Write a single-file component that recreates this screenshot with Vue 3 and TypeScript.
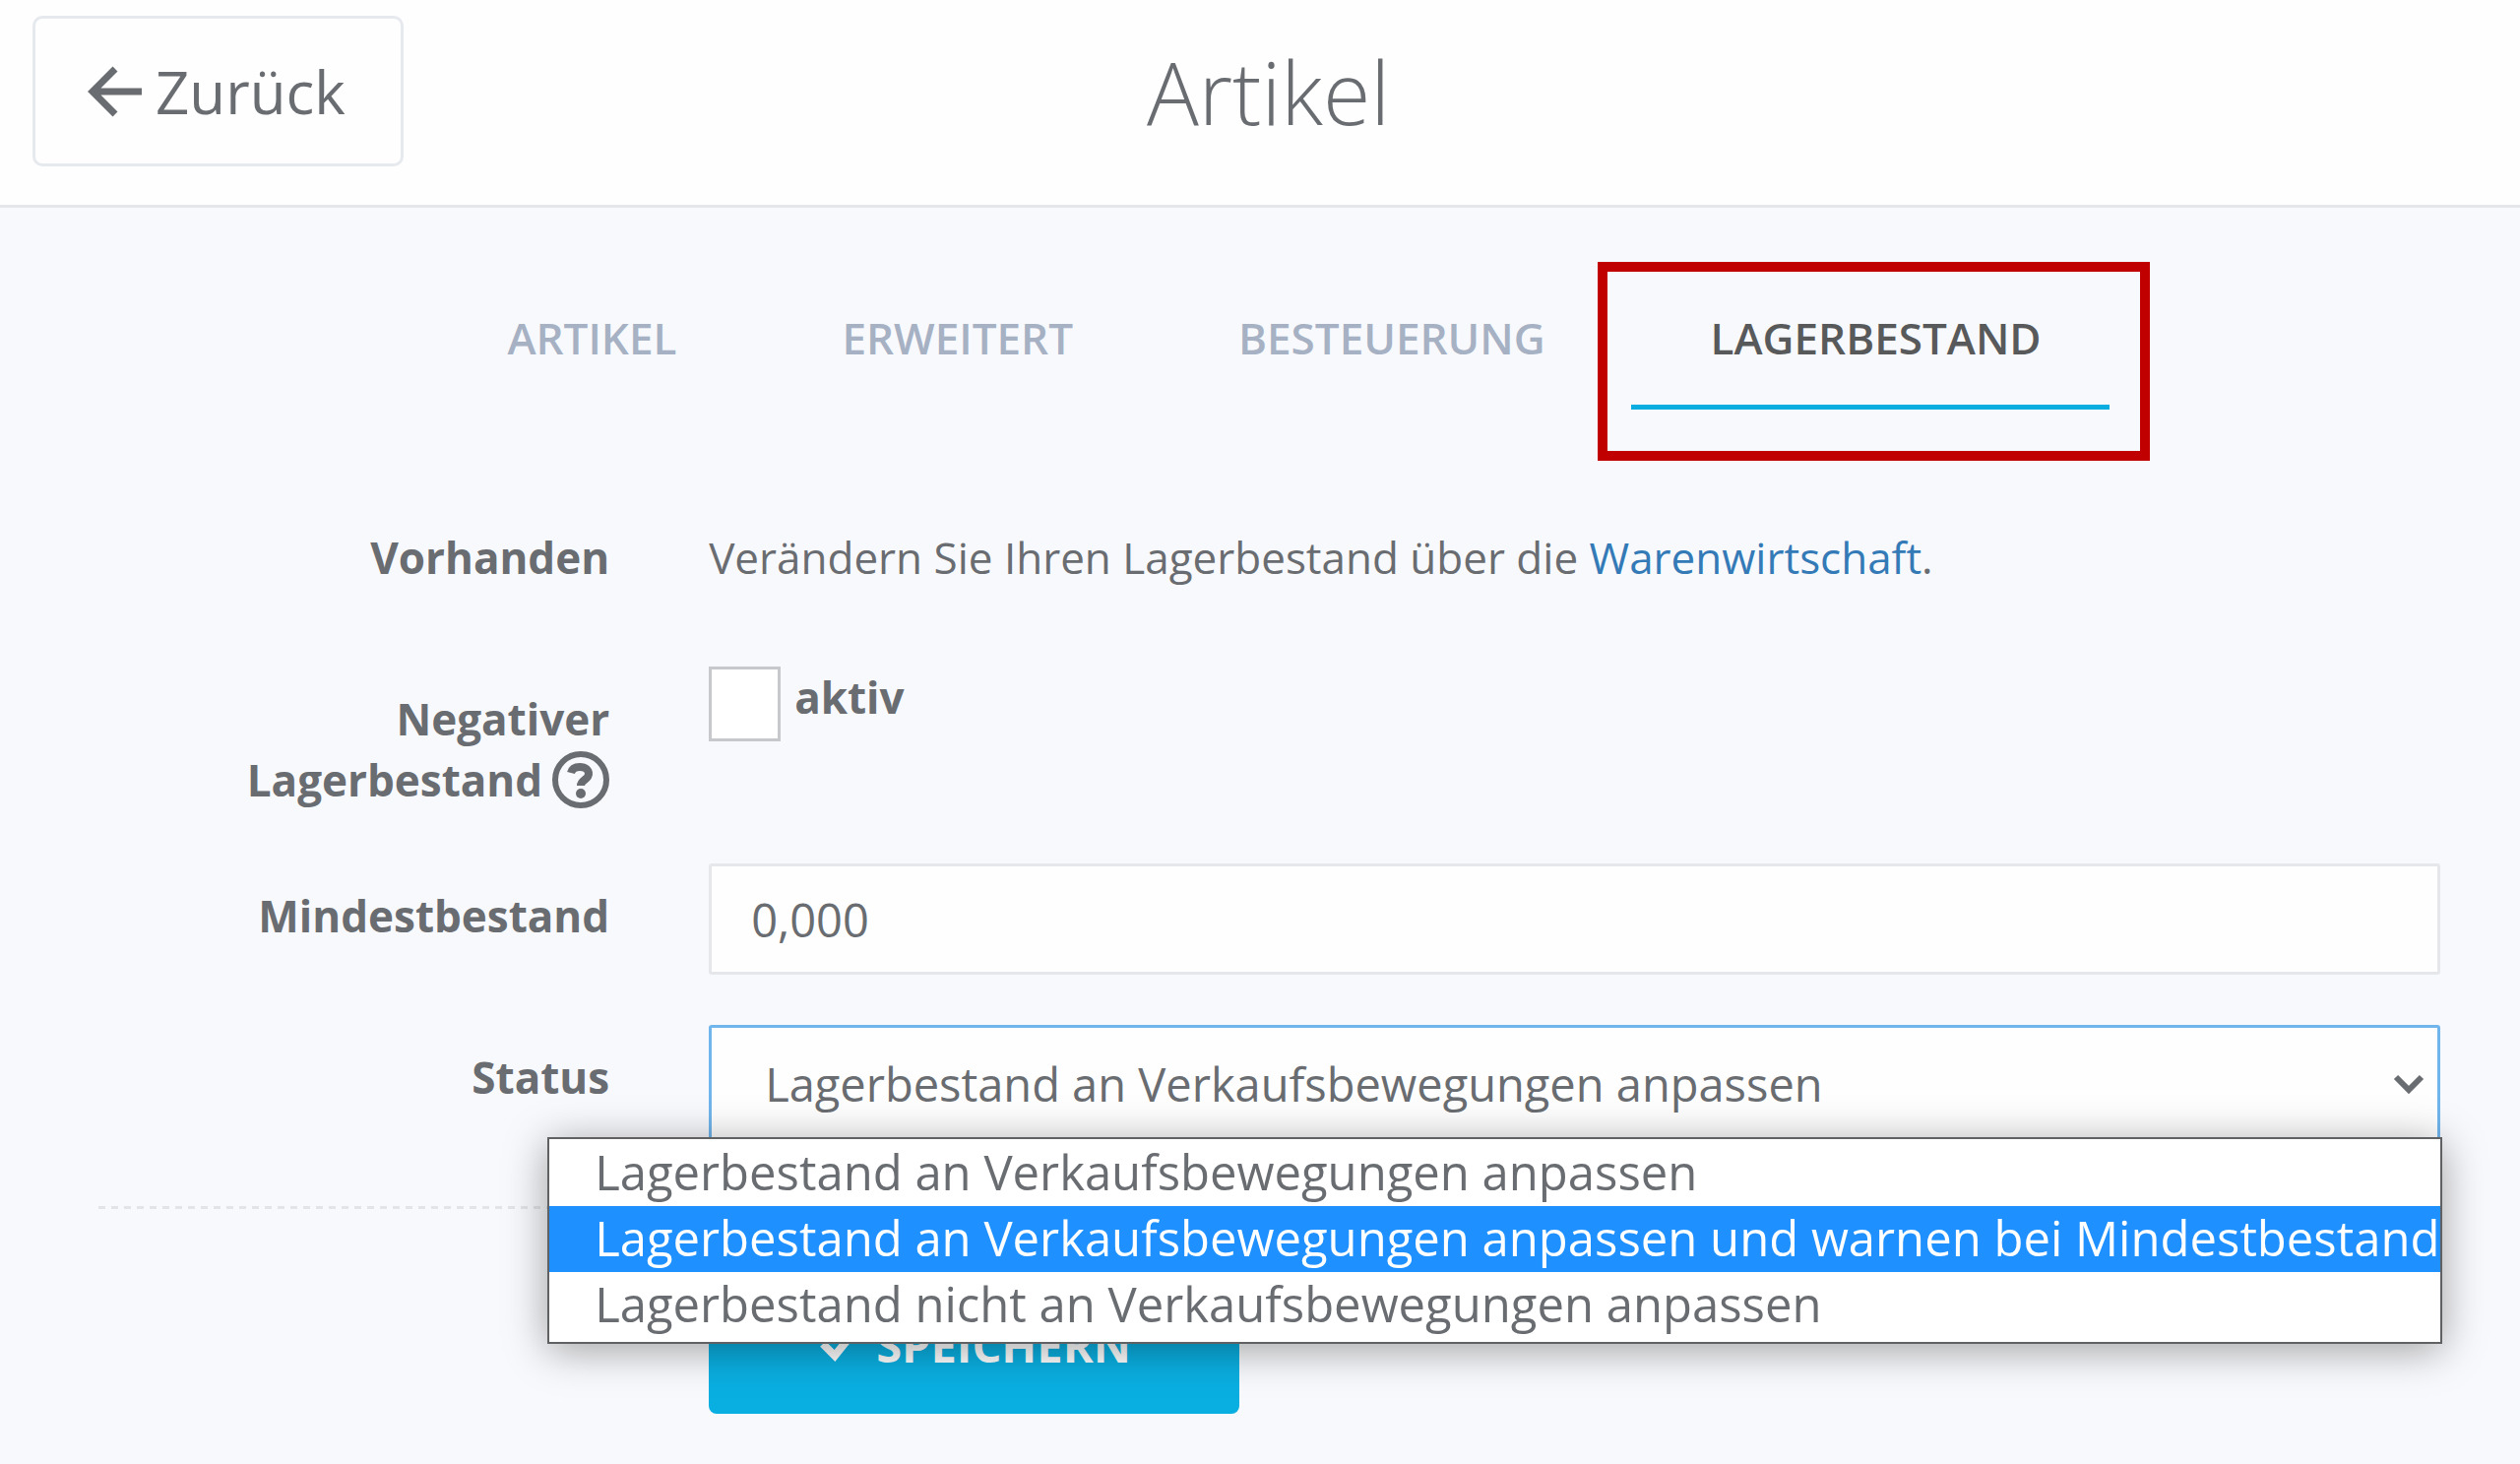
<script setup lang="ts">
import { ref } from 'vue'

const tabs: string[] = ['Artikel', 'Erweitert', 'Besteuerung', 'Lagerbestand']
const activeTab = ref<string>('Lagerbestand')

const statusOptions: string[] = [
  'Lagerbestand an Verkaufsbewegungen anpassen',
  'Lagerbestand an Verkaufsbewegungen anpassen und warnen bei Mindestbestand',
  'Lagerbestand nicht an Verkaufsbewegungen anpassen',
]
const status = ref<string>(statusOptions[0])
const highlighted = ref<number>(1)
const negativeStock = ref<boolean>(false)
const minimumStock = ref<string>('0,000')
</script>

<template>
  <div class="page">
    <header class="topbar">
      <button type="button" class="back">
        <svg class="back-icon" viewBox="0 0 56 56" aria-hidden="true">
          <path d="M28 5 5 28l23 23M5 28h50" />
        </svg>
        <span>Zurück</span>
      </button>
      <h1 class="title">Artikel</h1>
    </header>

    <nav class="tabs">
      <a
        v-for="tab in tabs"
        :key="tab"
        href="#"
        class="tab"
        :class="{ active: tab === activeTab }"
        @click.prevent="activeTab = tab"
      >{{ tab }}</a>
    </nav>

    <form class="form" @submit.prevent>
      <div class="row">
        <span class="label">Vorhanden</span>
        <p class="hint">Verändern Sie Ihren Lagerbestand über die <a href="#" class="link">Warenwirtschaft</a>.</p>
      </div>

      <div class="row">
        <span class="label">
          Negativer<br />
          <span class="label-line">
            Lagerbestand
            <svg class="help" viewBox="0 0 58 58" aria-hidden="true">
              <circle cx="29" cy="29" r="26" />
              <path d="M19 22c1-4 4-6 9-6 6 0 9 3 9 7 0 6-8 6-8 12" />
              <circle class="dot" cx="29" cy="43" r="5" />
            </svg>
          </span>
        </span>
        <label class="check">
          <input v-model="negativeStock" type="checkbox" class="box" />
          <span>aktiv</span>
        </label>
      </div>

      <div class="row">
        <label class="label" for="minimum">Mindestbestand</label>
        <input id="minimum" v-model="minimumStock" type="text" class="input" />
      </div>

      <div class="row">
        <label class="label" for="status">Status</label>
        <div class="select-wrap">
          <select id="status" v-model="status" class="select">
            <option v-for="option in statusOptions" :key="option" :value="option">{{ option }}</option>
          </select>
          <svg class="chevron" viewBox="0 0 32 20" aria-hidden="true">
            <path d="m3 3 13 13L29 3" />
          </svg>
          <ul class="menu" role="listbox" aria-label="Status">
            <li
              v-for="(option, index) in statusOptions"
              :key="option"
              class="option"
              :class="{ highlighted: index === highlighted }"
              role="option"
              :aria-selected="option === status"
              @mouseenter="highlighted = index"
              @click="status = option"
            >{{ option }}</li>
          </ul>
        </div>
      </div>

      <hr class="divider" />

      <div class="row actions">
        <button type="submit" class="save">
          <svg class="save-icon" viewBox="0 0 34 34" aria-hidden="true">
            <path d="m4 16 12 12L32 8" />
          </svg>
          <span>Speichern</span>
        </button>
      </div>
    </form>
  </div>
</template>

<style>
body {
  margin: 0;
  background: #f8f9fc;
}
</style>

<style scoped>
.page {
  min-height: 100vh;
  box-sizing: border-box;
  background: #f8f9fc;
  color: #696c70;
  font-family: "Open Sans", "Noto Sans", sans-serif;
  font-size: 44px;
  line-height: 62px;
}

.topbar {
  display: grid;
  grid-template-columns: 1fr auto 1fr;
  align-items: center;
  padding: 16px 16px 39px 33px;
  background: #fefefe;
  border-bottom: 3px solid #e4e6ea;
}

.back {
  display: flex;
  align-items: center;
  justify-self: start;
  gap: 13px;
  height: 153px;
  padding: 0 56px 0 53px;
  border: 3px solid #e6e9ee;
  border-radius: 10px;
  background: #fefefe;
  color: inherit;
  font: inherit;
  font-size: 60px;
}

.back-icon {
  width: 56px;
  height: 56px;
  fill: none;
  stroke: currentColor;
  stroke-width: 7;
}

.title {
  margin: 0;
  font-size: 88px;
  font-weight: 300;
  line-height: 120px;
}

.tabs {
  display: flex;
  justify-content: center;
  gap: 18px;
  padding: 101px 16px 0 33px;
}

.tab {
  position: relative;
  padding: 0 69px 37px 81px;
  border-bottom: 5px solid transparent;
  color: #a6b1c4;
  font-weight: 600;
  text-decoration: none;
  text-transform: uppercase;
}

.tab.active {
  border-bottom-color: #0aade0;
  color: #58595b;
}

.tab.active::after {
  content: "";
  position: absolute;
  inset: -46px -41px -57px -34px;
  border: 10px solid #c00000;
}

.form {
  display: flex;
  flex-direction: column;
  gap: 51px;
  padding: 97px 81px 51px 100px;
}

.row {
  display: grid;
  grid-template-columns: 8fr 27fr;
  column-gap: 99px;
  align-items: start;
  min-height: 113px;
}

.label {
  padding: 22px 2px 3px 0;
  font-weight: 700;
  text-align: right;
}

.label-line {
  display: inline-flex;
  align-items: center;
  gap: 10px;
  height: 62px;
  vertical-align: top;
}

.help {
  width: 58px;
  height: 58px;
  fill: none;
  stroke: currentColor;
  stroke-width: 6;
}

.help path {
  stroke-width: 8;
}

.help .dot {
  fill: currentColor;
  stroke: none;
}

.hint {
  margin: 0;
  padding-top: 22px;
}

.link {
  color: #337ab7;
  text-decoration: none;
}

.check {
  display: flex;
  align-items: flex-start;
  justify-self: start;
  gap: 14px;
  font-weight: 700;
}

.box {
  appearance: none;
  width: 73px;
  height: 76px;
  margin: 0;
  border: 3px solid #c6c8cb;
  background: #fff;
}

.input,
.select {
  box-sizing: border-box;
  width: 100%;
  border: 3px solid #e6e7ea;
  border-radius: 3px;
  background: #fefefe;
  color: inherit;
  font: inherit;
  font-size: 47px;
}

.input {
  height: 113px;
  padding: 0 40px;
}

.select-wrap {
  position: relative;
}

.select {
  display: block;
  appearance: none;
  height: 120px;
  padding: 0 100px 0 54px;
  border-color: #70b5ec;
}

.chevron {
  position: absolute;
  top: 50px;
  right: 16px;
  width: 32px;
  height: 20px;
  fill: none;
  stroke: currentColor;
  stroke-width: 6;
}

.menu {
  position: absolute;
  z-index: 1;
  top: 114px;
  right: -2px;
  left: -164px;
  margin: 0;
  padding: 1px 0 4px;
  border: 2px solid #606163;
  background: #fff;
  box-shadow: 0 6px 40px rgba(0, 0, 0, 0.36);
  list-style: none;
  font-size: 49px;
}

.option {
  padding: 0 0 2px 46px;
  line-height: 65px;
  white-space: nowrap;
}

.option.highlighted {
  background: #1e90ff;
  color: #fff;
}

.divider {
  width: 100%;
  height: 3px;
  margin: 13px 0 17px;
  border: 0;
  background: repeating-linear-gradient(90deg, #e2e4e8 0 7px, transparent 7px 13px);
}

.save {
  grid-column: 2;
  justify-self: start;
  display: flex;
  align-items: center;
  gap: 24px;
  height: 140px;
  padding: 0 110px 0 112px;
  border: 0;
  border-radius: 8px;
  background: #0aafe1;
  color: #fff;
  font: inherit;
  font-size: 47px;
  font-weight: 700;
  text-transform: uppercase;
}

.save-icon {
  width: 34px;
  height: 34px;
  fill: none;
  stroke: currentColor;
  stroke-width: 8;
}
</style>
